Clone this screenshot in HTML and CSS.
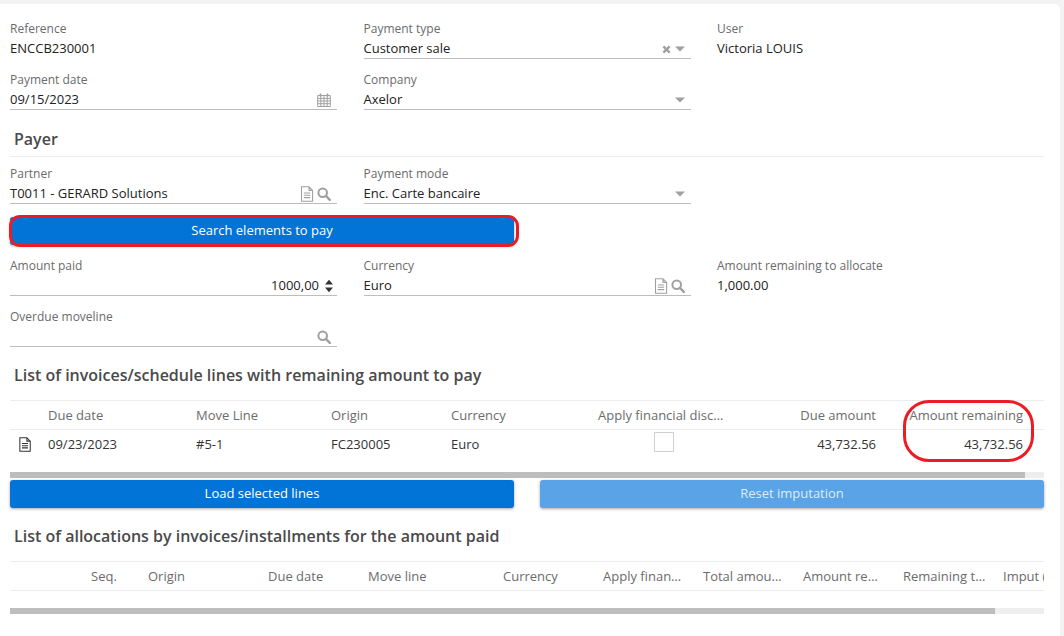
FILE: index.html
```html
<!DOCTYPE html>
<html lang="en">
<head>
<meta charset="utf-8">
<title>Payment</title>
<link rel="stylesheet" href="styles.css">
</head>
<body>
<svg class="defs" aria-hidden="true">
  <symbol id="i-file" viewBox="0 0 14 16"><path d="M1.5 .8h7.5l3.6 3.6v10.8H1.5z M9 .8v3.6h3.6 M3.8 7h6.4 M3.8 9.3h6.4 M3.8 11.6h6.4" fill="none" stroke="currentColor" stroke-width="1.1"/></symbol>
  <symbol id="i-search" viewBox="0 0 14 14"><circle cx="5.7" cy="5.7" r="4.3" fill="none" stroke="currentColor" stroke-width="2"/><path d="M8.9 8.9l3.9 3.9" stroke="currentColor" stroke-width="2.4" stroke-linecap="round"/></symbol>
  <symbol id="i-cal" viewBox="0 0 14 14"><path d="M.7 2.5h12.6v11H.7z M.7 5.4h12.6 M.7 8h12.6 M.7 10.7h12.6 M3.8 2.5v11 M7 2.5v11 M10.2 2.5v11" fill="none" stroke="currentColor" stroke-width="1"/><path d="M3.5.6v3 M10.5.6v3" stroke="currentColor" stroke-width="1.6"/></symbol>
  <symbol id="i-x" viewBox="0 0 10 10"><path d="M1.5 1.5l7 7 M8.5 1.5l-7 7" stroke="currentColor" stroke-width="2.6"/></symbol>
  <symbol id="i-caret" viewBox="0 0 10 6"><path d="M0 .5h10L5 5.5z" fill="currentColor"/></symbol>
  <symbol id="i-sort" viewBox="0 0 8 14"><path d="M0 5.5L4 .8l4 4.7z M0 8.5l4 4.7 4-4.7z" fill="currentColor"/></symbol>
</svg>

<main class="card">
  <div class="form-grid">
    <div class="field plain"><label>Reference</label><div class="value">ENCCB230001</div></div>
    <div class="field"><label>Payment type</label><div class="value">Customer sale<span class="icons"><svg class="ic-x"><use href="#i-x"/></svg><svg class="ic-caret"><use href="#i-caret"/></svg></span></div></div>
    <div class="field plain"><label>User</label><div class="value">Victoria LOUIS</div></div>
    <div class="field"><label>Payment date</label><div class="value">09/15/2023<span class="icons"><svg class="ic-cal"><use href="#i-cal"/></svg></span></div></div>
    <div class="field"><label>Company</label><div class="value">Axelor<span class="icons"><svg class="ic-caret"><use href="#i-caret"/></svg></span></div></div>
  </div>

  <h2 class="section payer">Payer</h2>

  <div class="form-grid">
    <div class="field"><label>Partner</label><div class="value">T0011 - GERARD Solutions<span class="icons"><svg class="ic-file"><use href="#i-file"/></svg><svg class="ic-search"><use href="#i-search"/></svg></span></div></div>
    <div class="field"><label>Payment mode</label><div class="value">Enc. Carte bancaire<span class="icons"><svg class="ic-caret"><use href="#i-caret"/></svg></span></div></div>
  </div>

  <div class="btn-row search-row">
    <button class="btn">Search elements to pay</button>
    <span class="mark mark-search"></span>
  </div>

  <div class="form-grid">
    <div class="field"><label>Amount paid</label><div class="value right">1000,00<span class="icons"><svg class="ic-sort"><use href="#i-sort"/></svg></span></div></div>
    <div class="field"><label>Currency</label><div class="value">Euro<span class="icons"><svg class="ic-file"><use href="#i-file"/></svg><svg class="ic-search"><use href="#i-search"/></svg></span></div></div>
    <div class="field plain"><label>Amount remaining to allocate</label><div class="value">1,000.00</div></div>
    <div class="field"><label>Overdue moveline</label><div class="value"><span class="icons"><svg class="ic-search"><use href="#i-search"/></svg></span></div></div>
  </div>

  <h2 class="title title-1">List of invoices/schedule lines with remaining amount to pay</h2>

  <div class="table-wrap">
    <div class="grid-table t1">
      <div class="row head">
        <span></span><span>Due date</span><span>Move Line</span><span>Origin</span><span>Currency</span><span>Apply financial disc…</span><span class="num">Due amount</span><span class="num">Amount remaining</span>
      </div>
      <div class="row body">
        <span class="row-icon"><svg class="ic-rowfile"><use href="#i-file"/></svg></span><span>09/23/2023</span><span>#5-1</span><span>FC230005</span><span>Euro</span><span class="check-cell"><i class="check"></i></span><span class="num">43,732.56</span><span class="num">43,732.56</span>
      </div>
    </div>
    <span class="mark mark-amount"></span>
  </div>
  <div class="scroll s1"><div class="thumb"></div></div>

  <div class="btn-row two">
    <button class="btn">Load selected lines</button>
    <button class="btn light">Reset imputation</button>
  </div>

  <h2 class="title title-2">List of allocations by invoices/installments for the amount paid</h2>

  <div class="table-wrap">
    <div class="grid-table t2">
      <div class="row head">
        <span></span><span>Seq.</span><span>Origin</span><span>Due date</span><span>Move line</span><span>Currency</span><span>Apply finan…</span><span>Total amou…</span><span>Amount re…</span><span>Remaining t…</span><span>Imput (</span>
      </div>
    </div>
  </div>
  <div class="scroll s2"><div class="thumb"></div></div>
</main>
</body>
</html>
```
FILE: styles.css
```css
* { box-sizing: border-box; }
html, body { margin: 0; height: 100%; overflow: hidden; }
body {
  background: #f3f3f3;
  padding: 4px 4px 0 0;
  font-family: "Open Sans", "Liberation Sans", sans-serif;
  font-size: 13px;
  color: #222;
}
.defs { display: none; }
.card {
  background: #fff;
  height: 632px;
  border-top-right-radius: 5px;
  padding: 15px 16px 0 10px;
}
.form-grid {
  display: grid;
  grid-template-columns: repeat(3, 327px);
  column-gap: 26.5px;
  row-gap: 11px;
}
.field label {
  display: block;
  height: 20px;
  line-height: 20px;
  font-size: 12px;
  color: #6b6b6b;
}
.value {
  position: relative;
  height: 20px;
  line-height: 19px;
  border-bottom: 1px solid #bdbdbd;
  display: flex;
  align-items: center;
  white-space: nowrap;
}
.plain .value { border-bottom-color: transparent; }
.value.right { justify-content: flex-end; }
.icons {
  margin-left: auto;
  display: flex;
  align-items: center;
  gap: 3px;
  padding-right: 6px;
  color: #a0a0a0;
}
.value.right .icons { margin-left: 6px; color: #333; padding-right: 4px; }
.icons svg { display: block; }
.ic-x { width: 9px; height: 9px; margin-top: 1px; }
.ic-caret { width: 10px; height: 6px; margin-left: 1px; }
.ic-cal { width: 14px; height: 14px; margin-top: 1px; }
.ic-file { width: 14px; height: 16px; margin-top: 1px; }
.ic-search { width: 14px; height: 14px; margin-top: 1px; }
.ic-sort { width: 8px; height: 14px; }
.ic-rowfile { width: 14px; height: 15px; color: #333; display: block; }
.section {
  margin: 11px 0 7px;
  height: 36px;
  line-height: 36px;
  border-bottom: 1px solid #ececec;
  padding-left: 4px;
  font-size: 16px;
  font-weight: 600;
  color: #4a4a4a;
}
.title {
  margin: 0;
  padding-left: 4px;
  font-size: 16px;
  font-weight: 600;
  color: #4a4a4a;
  white-space: nowrap;
}
.title-1 { height: 53px; padding-top: 17px; line-height: 22px; }
.title-2 { height: 53px; padding-top: 17px; line-height: 22px; }
.btn-row { position: relative; }
.search-row { width: 504px; margin: 13px 0 11px; }
.btn {
  display: block;
  width: 504px;
  height: 28px;
  border: 0;
  border-radius: 3px;
  background: #0274d8;
  color: #fff;
  font: 500 13px/26px "Open Sans", "Liberation Sans", sans-serif;
  box-shadow: 0 1px 3px rgba(0, 0, 0, .35);
  padding: 0 0 2px;
}
.btn.light { background: #59a3e6; color: #dcedfb; }
.two { display: flex; justify-content: space-between; margin-top: 2px; }
.table-wrap { position: relative; }
.grid-table { overflow: hidden; border-top: 1px solid #ececec; }
.row {
  display: grid;
  align-items: center;
}
.t1 .row { grid-template-columns: 28px 148px 135px 120px 147px 143px 155px 147px; }
.t2 .row { grid-template-columns: 71px 57px 120px 100px 135px 100px 100px 100px 100px 100px 51px; }
.row > span {
  padding: 0 10px;
  white-space: nowrap;
  overflow: hidden;
}
.row > span:first-child { padding: 0; }
.t2 .head > span:last-child { padding-right: 0; }
.head { height: 29px; border-bottom: 1px solid #ececec; color: #6b6b6b; }
.body { height: 41px; padding-bottom: 13px; color: #333; }
.num { text-align: right; }
.row-icon { padding-left: 8px !important; }
.check-cell { display: flex; justify-content: center; }
.check { display: block; width: 20px; height: 20px; margin: 0 0 4px 9px; border: 1px solid #d0d0d0; background: #fff; }
.scroll { height: 6px; background: #eeeeee; width: 1034px; }
.thumb { height: 6px; background: #bdbdbd; }
.s1 { margin-top: 1px; }
.s1 .thumb { width: 1015px; }
.s2 { margin-top: 17px; }
.s2 .thumb { width: 985px; }
.mark {
  position: absolute;
  border: 3px solid #ec1c24;
  background: transparent;
  pointer-events: none;
}
.mark-search { left: -1px; top: -2px; width: 510px; height: 32px; border-radius: 11px; }
.mark-amount { left: 893px; top: 0; width: 131px; height: 62px; border-radius: 26px; }
```
